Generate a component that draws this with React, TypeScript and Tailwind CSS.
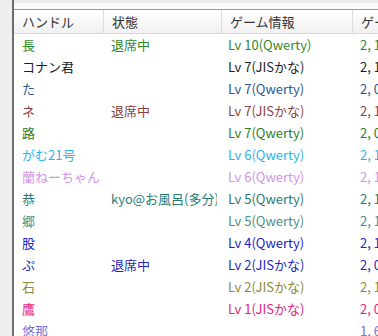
const font = {
  fontFamily: '"Noto Sans CJK JP", "Noto Sans", sans-serif',
};

type Row = { handle: string; status: string; game: string; extra: string; color: string };

const rows: Row[] = [
  { handle: "長", status: "退席中", game: "Lv 10(Qwerty)", extra: "2, 1", color: "text-[#2f8a2a]" },
  { handle: "コナン君", status: "", game: "Lv 7(JISかな)", extra: "2, 1", color: "text-[#1e1e1e]" },
  { handle: "た", status: "", game: "Lv 7(Qwerty)", extra: "2, 0", color: "text-[#2b5595]" },
  { handle: "ネ", status: "退席中", game: "Lv 7(JISかな)", extra: "2, 1", color: "text-[#8a3f3f]" },
  { handle: "路", status: "", game: "Lv 7(Qwerty)", extra: "2, 0", color: "text-[#2d7d1f]" },
  { handle: "がむ21号", status: "", game: "Lv 6(Qwerty)", extra: "2, 1", color: "text-[#2fb3e6]" },
  { handle: "蘭ねーちゃん", status: "", game: "Lv 6(Qwerty)", extra: "2, 1", color: "text-[#d493e6]" },
  { handle: "恭", status: "kyo@お風呂(多分)", game: "Lv 5(Qwerty)", extra: "2, 1", color: "text-[#2a7a72]" },
  { handle: "郷", status: "", game: "Lv 5(Qwerty)", extra: "2, 1", color: "text-[#4d8f86]" },
  { handle: "股", status: "", game: "Lv 4(Qwerty)", extra: "2, 1", color: "text-[#2222c8]" },
  { handle: "ぷ", status: "退席中", game: "Lv 2(JISかな)", extra: "2, 0", color: "text-[#2727bf]" },
  { handle: "石", status: "", game: "Lv 2(JISかな)", extra: "2, 1", color: "text-[#8c8a36]" },
  { handle: "鷹", status: "", game: "Lv 1(JISかな)", extra: "2, 0", color: "text-[#e0257e]" },
  { handle: "悠那", status: "", game: "", extra: "1, 6", color: "text-[#7373d6]" },
];

const cols = "grid grid-cols-[90px_118px_131px_60px]";

export default function App() {
  return (
    <div className="h-[336px] w-[378px] overflow-hidden bg-[#efefef] pl-[12px]" style={font}>
      <div className="h-full border-l-2 border-[#6d6d6d] bg-white">
        {/* frame above the list */}
        <div className="h-[3px] bg-[#ececec]" />
        <div className="h-[7px] border-b border-[#9a9a9a] bg-[#f9f9f9]" />

        {/* header */}
        <div className={`${cols} h-[24px] border-b border-[#d8d8d8] bg-gradient-to-b from-white to-[#f1f1f1] text-[13px] text-[#333]`}>
          {["ハンドル", "状態", "ゲーム情報", "ゲーム"].map((h) => (
            <div key={h} className="flex items-center overflow-hidden whitespace-nowrap border-r border-[#dedede] pl-[8px]">
              {h}
            </div>
          ))}
        </div>

        {/* rows */}
        {rows.map((r) => (
          <div key={r.handle} className={`${cols} h-[22px] text-[13px] ${r.color}`}>
            <div className="flex items-center overflow-hidden whitespace-nowrap pl-[8px]">{r.handle}</div>
            <div className="flex items-center whitespace-nowrap pl-[7px]">
              <span className="max-w-[106px] overflow-hidden">{r.status}</span>
            </div>
            <div className="flex items-center overflow-hidden whitespace-nowrap pl-[6px]">{r.game}</div>
            <div className="flex items-center overflow-hidden whitespace-nowrap pl-[7px]">{r.extra}</div>
          </div>
        ))}
      </div>
    </div>
  );
}
